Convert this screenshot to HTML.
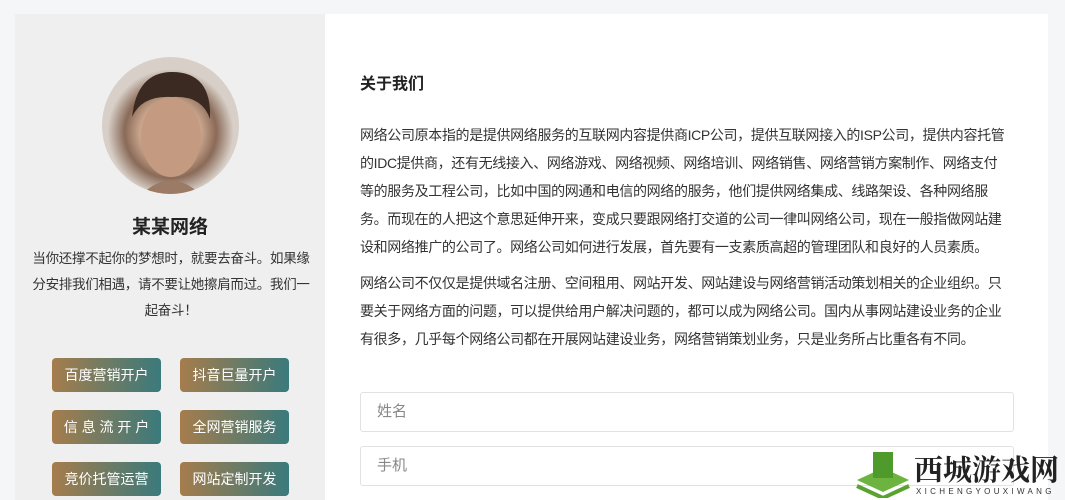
<!DOCTYPE html><html><head><meta charset="utf-8"><style>
html,body{margin:0;width:1065px;height:500px;overflow:hidden}
body{background:#f4f6f8;font-family:"Liberation Sans","Noto Sans CJK SC",sans-serif;position:relative}
.left{position:absolute;left:15px;top:14px;width:310px;height:490px;background:#efefef}
.right{position:absolute;left:325px;top:14px;width:723px;height:490px;background:#fff}
.av{position:absolute;left:102px;top:57px;width:137px;height:137px;border-radius:50%;background:radial-gradient(circle at 50% 55%,#c9a58c 0 30%,#8a6a58 45%,#d8d0c8 62%);overflow:hidden}
.name{position:absolute;left:0;width:340px;top:212px;text-align:center;font-size:19px;font-weight:bold;color:#222}
.desc{position:absolute;left:30px;width:282px;top:246px;text-align:center;font-size:13.5px;letter-spacing:-0.3px;line-height:26px;color:#333}
.b{position:absolute;width:109px;height:34px;border-radius:4px;background:linear-gradient(90deg,#a57c4c,#3a7a7c);color:#fff;font-size:14px;line-height:34px;text-align:center}
h3{position:absolute;left:360px;top:70px;margin:0;font-size:16px;color:#222}
.p{position:absolute;left:360px;width:649px;font-size:14px;letter-spacing:-0.35px;line-height:28px;color:#333}
.in{position:absolute;left:360px;width:654px;height:40px;border:1px solid #e2e2e2;border-radius:3px;font-size:15px;color:#888;line-height:38px;padding-left:16px;box-sizing:border-box}
</style></head><body>
<div class="left"></div><div class="right"></div>
<div class="av"><svg width="137" height="137"><path d="M30 60 Q35 15 70 15 Q110 15 108 62 Q100 38 70 40 Q40 38 30 60Z" fill="#3a2a22"/><ellipse cx="69" cy="80" rx="30" ry="40" fill="#c49a80"/><path d="M40 137 Q69 110 98 137Z" fill="#9b7a66"/></svg></div>
<div class="name">某某网络</div>
<div class="desc">当你还撑不起你的梦想时，就要去奋斗。如果缘分安排我们相遇，请不要让她擦肩而过。我们一起奋斗！</div>
<div class="b" style="left:52px;top:358px">百度营销开户</div>
<div class="b" style="left:180px;top:358px">抖音巨量开户</div>
<div class="b" style="left:52px;top:410px">信 息 流 开 户</div>
<div class="b" style="left:180px;top:410px">全网营销服务</div>
<div class="b" style="left:52px;top:462px">竞价托管运营</div>
<div class="b" style="left:180px;top:462px">网站定制开发</div>
<h3>关于我们</h3>
<div class="p" style="top:121px">网络公司原本指的是提供网络服务的互联网内容提供商ICP公司，提供互联网接入的ISP公司，提供内容托管的IDC提供商，还有无线接入、网络游戏、网络视频、网络培训、网络销售、网络营销方案制作、网络支付<br>等的服务及工程公司，比如中国的网通和电信的网络的服务，他们提供网络集成、线路架设、各种网络服<br>务。而现在的人把这个意思延伸开来，变成只要跟网络打交道的公司一律叫网络公司，现在一般指做网站建<br>设和网络推广的公司了。网络公司如何进行发展，首先要有一支素质高超的管理团队和良好的人员素质。</div>
<div class="p" style="top:269px">网络公司不仅仅是提供域名注册、空间租用、网站开发、网站建设与网络营销活动策划相关的企业组织。只<br>要关于网络方面的问题，可以提供给用户解决问题的，都可以成为网络公司。国内从事网站建设业务的企业<br>有很多，几乎每个网络公司都在开展网站建设业务，网络营销策划业务，只是业务所占比重各有不同。</div>
<div class="in" style="top:392px">姓名</div>
<div class="in" style="top:446px">手机</div>
<svg style="position:absolute;left:855px;top:450px" width="56" height="48"><path d="M28 18 L54 30 L28 42 L2 30Z" fill="#6cb33f"/><path d="M2 36 L28 48 L54 36" stroke="#5aa230" stroke-width="4" fill="none"/><rect x="18" y="2" width="20" height="26" fill="#4e9a2a"/></svg>
<div style="position:absolute;left:914px;top:452px;font-size:29px;line-height:34px;white-space:nowrap;font-family:'Noto Serif CJK SC',serif;font-weight:bold;color:#222">西城游戏网</div>
<div style="position:absolute;left:916px;top:487px;font-size:8px;white-space:nowrap;letter-spacing:3.3px;color:#333">XICHENGYOUXIWANG</div>
</body></html>
